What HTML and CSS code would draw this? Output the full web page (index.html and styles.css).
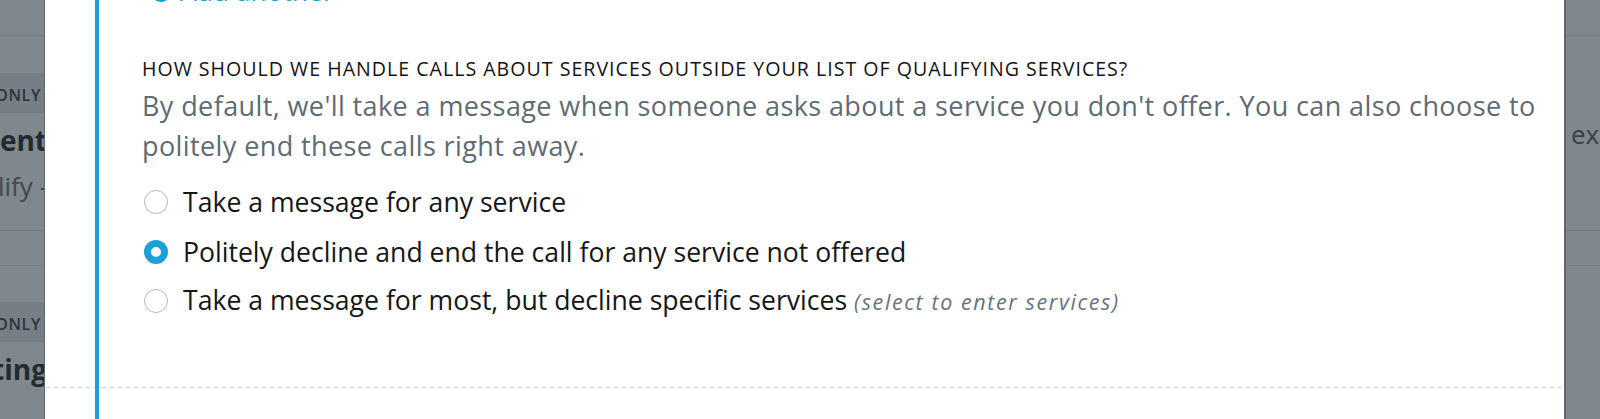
FILE: index.html
```html
<!DOCTYPE html>
<html lang="en">
<head>
<meta charset="utf-8">
<title>Qualifying services</title>
<link rel="stylesheet" href="styles.css">
</head>
<body>
<div class="screen">
  <div class="backdrop backdrop-left">
    <div class="bg-row r-top"></div>
    <div class="bg-row r-gap1"></div>
    <div class="bg-row r-band"><span class="tag">BOOKING ONLY</span></div>
    <div class="bg-row r-title"><span class="title">Appointment</span></div>
    <div class="bg-row r-sub"><span class="sub">Leads that qualify -</span></div>
    <div class="bg-row r-sep"></div>
    <div class="bg-row r-gap2"></div>
    <div class="bg-row r-band"><span class="tag">BOOKING ONLY</span></div>
    <div class="bg-row r-title2"><span class="title">Existing</span></div>
  </div>

  <div class="modal">
    <div class="bar"></div>
    <div class="content">
      <div class="add-link"><svg class="add-icon" width="20" height="20" viewBox="0 0 20 20"><circle cx="10" cy="10" r="9" fill="none" stroke="#1a9fd9" stroke-width="2"/><path d="M10 5.5v9M5.5 10h9" stroke="#1a9fd9" stroke-width="2"/></svg>Add another</div>
      <h3 class="q-title">How should we handle calls about services outside your list of qualifying services?</h3>
      <p class="q-desc">By default, we'll take a message when someone asks about a service you don't offer. You can also choose to politely end these calls right away.</p>
      <div class="options">
        <label class="option"><span class="radio"></span><span class="opt-text">Take a message for any service</span></label>
        <label class="option"><span class="radio checked"></span><span class="opt-text">Politely decline and end the call for any service not offered</span></label>
        <label class="option"><span class="radio"></span><span class="opt-text">Take a message for most, but decline specific services <em class="hint">(select to enter services)</em></span></label>
      </div>
    </div>
    <div class="divider"></div>
  </div>

  <div class="backdrop backdrop-right">
    <div class="bg-row r-top"></div>
    <div class="bg-row r-gap1"></div>
    <div class="bg-row r-band-r"></div>
    <div class="bg-row r-title r-left"><span class="ex">exclude</span></div>
    <div class="bg-row r-sub"></div>
    <div class="bg-row r-sep"></div>
    <div class="bg-row r-gap2"></div>
  </div>
</div>
</body>
</html>
```

FILE: styles.css
```css
* { box-sizing: border-box; }

html, body {
  margin: 0;
  padding: 0;
  height: 419px;
  overflow: hidden;
  background: #80878d;
  font-family: "Open Sans", "Liberation Sans", sans-serif;
}

.screen {
  display: flex;
  height: 419px;
}

/* dimmed page behind the modal */
.backdrop {
  flex: none;
  overflow: hidden;
  display: flex;
  flex-direction: column;
  background: #80878d;
}
.backdrop-left {
  width: 45px;
  border-right: 1px solid #5f676d;
}
.backdrop-right {
  width: 36px;
  border-left: 2px solid #5f676d;
}

.bg-row {
  flex: none;
  display: flex;
  justify-content: flex-end;
  align-items: flex-start;
  white-space: nowrap;
}
.r-left { justify-content: flex-start; }
.r-top { height: 36px; border-bottom: 1px solid #747b81; }
.r-gap1 { height: 37px; }
.r-band { height: 40px; background: #777e84; align-items: center; }
.r-band-r { height: 40px; }
.r-title { height: 46px; padding-top: 5px; }
.r-sub { height: 72px; padding-top: 7px; border-bottom: 1px solid #757c82; }
.r-sep { height: 35px; border-bottom: 1px solid #777e84; }
.r-gap2 { height: 36px; }
.r-title2 { height: 80px; padding-top: 5px; }

.tag {
  font-size: 16px;
  font-weight: 600;
  color: #2c353b;
  letter-spacing: 0.6px;
  margin-right: 3px;
  margin-top: 4px;
}
.title {
  font-size: 28px;
  font-weight: 700;
  color: #222b31;
  line-height: 44px;
  margin-right: -3px;
}
.sub {
  font-size: 26px;
  color: #3f494f;
  line-height: 40px;
  margin-right: -4px;
}
.ex {
  font-size: 26px;
  color: #353f46;
  line-height: 44px;
  margin-left: 5px;
  margin-top: -6px;
}

/* modal */
.modal {
  flex: 1;
  background: #fff;
  display: grid;
  grid-template-columns: 50px 4px 1fr;
  grid-template-rows: 387px 1px 1fr;
}
.bar {
  grid-column: 2;
  grid-row: 1 / 4;
  background: #1a9fd9;
  z-index: 1;
}
.content {
  grid-column: 3;
  grid-row: 1;
  padding-left: 43px;
  overflow: hidden;
}
.divider {
  grid-column: 1 / 4;
  grid-row: 2;
  background: repeating-linear-gradient(to right, #d3d7db 0 5px, transparent 5px 8px);
}

.add-link {
  margin-top: -26px;
  padding-left: 9px;
  font-size: 26.4px;
  line-height: 34px;
  color: #1a9fd9;
}
.add-icon {
  vertical-align: -1px;
  margin-right: 9px;
}

.q-title {
  margin: 48.5px 0 0;
  font-size: 19.6px;
  line-height: 24px;
  font-weight: 400;
  letter-spacing: 1px;
  text-transform: uppercase;
  color: #141414;
}
.q-desc {
  margin: 5.5px 0 0;
  font-size: 27px;
  letter-spacing: 0.4px;
  line-height: 40px;
  color: #5f6b73;
}

.options {
  margin-top: 11.5px;
  display: flex;
  flex-direction: column;
}
.option {
  height: 49.5px;
  display: flex;
  align-items: center;
  gap: 15px;
}
.radio {
  flex: none;
  width: 24px;
  height: 24px;
  margin-left: 2px;
  border-radius: 50%;
  border: 1.5px solid #b3bac0;
  background: #fff;
}
.radio.checked {
  border: 7.5px solid #1a9fd9;
  background: #fff;
}
.opt-text {
  font-size: 26.6px;
  line-height: 34px;
  color: #161616;
}
.hint {
  font-size: 21.5px;
  letter-spacing: 1.6px;
  color: #68737b;
}
```
